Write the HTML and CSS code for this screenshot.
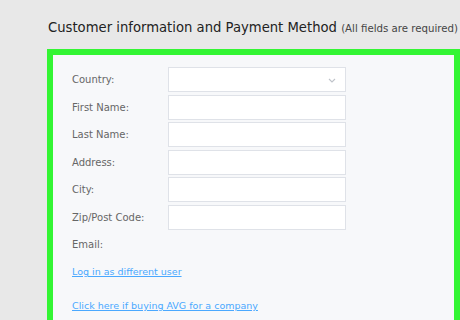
FILE: index.html
```html
<!DOCTYPE html>
<html lang="en">
<head>
  <meta charset="UTF-8">
  <title>Checkout</title>
  <link rel="stylesheet" href="styles.css">
</head>
<body>
  <h2 class="title">Customer information and Payment Method <small>(All fields are required)</small></h2>

  <div class="box">
    <div class="row">
      <label for="country">Country:</label>
      <div class="select">
        <select id="country"><option></option></select>
        <svg class="chev" width="8" height="5" viewBox="0 0 8 5"><path d="M1 1l3 3 3-3" fill="none" stroke="#bfc3ca" stroke-width="1.1"/></svg>
      </div>
    </div>
    <div class="row">
      <label for="first">First Name:</label>
      <input type="text" id="first">
    </div>
    <div class="row">
      <label for="last">Last Name:</label>
      <input type="text" id="last">
    </div>
    <div class="row">
      <label for="address">Address:</label>
      <input type="text" id="address">
    </div>
    <div class="row">
      <label for="city">City:</label>
      <input type="text" id="city">
    </div>
    <div class="row">
      <label for="zip">Zip/Post Code:</label>
      <input type="text" id="zip">
    </div>
    <div class="row">
      <label>Email:</label>
    </div>

    <a class="link login" href="#">Log in as different user</a>
    <a class="link company" href="#">Click here if buying AVG for a company</a>
  </div>
</body>
</html>
```

FILE: styles.css
```css
html, body {
  height: 320px;
  overflow: hidden;
}
body {
  margin: 0;
  padding: 0 0 0 47px;
  background: #e8e8e8;
  font-family: "DejaVu Sans", Verdana, sans-serif;
}
.title {
  margin: 0;
  padding: 20px 0 0 1px;
  height: 49px;
  box-sizing: border-box;
  font-size: 13.2px;
  font-weight: normal;
  color: #222;
  white-space: nowrap;
}
.title small {
  font-size: 10.2px;
  color: #444;
}
.box {
  border: 6px solid #33f533;
  border-bottom: none;
  background: #f7f8fa;
  padding: 12px 0 0 19px;
  height: 280px;
}
.row {
  display: flex;
  align-items: center;
  height: 25px;
  margin-bottom: 2.5px;
}
label {
  width: 96px;
  font-size: 10px;
  color: #666;
}
input, .select {
  width: 178px;
  height: 25px;
  box-sizing: border-box;
  border: 1px solid #dfe2e8;
  background: #fff;
  margin: 0;
}
.select {
  position: relative;
}
.select select {
  width: 100%;
  height: 100%;
  border: none;
  background: transparent;
  appearance: none;
}
.chev {
  position: absolute;
  right: 9px;
  top: 10px;
}
.link {
  display: block;
  font-size: 9.5px;
  color: #4aa8ff;
}
.login {
  margin-top: 9px;
}
.company {
  margin-top: 23px;
}
```
